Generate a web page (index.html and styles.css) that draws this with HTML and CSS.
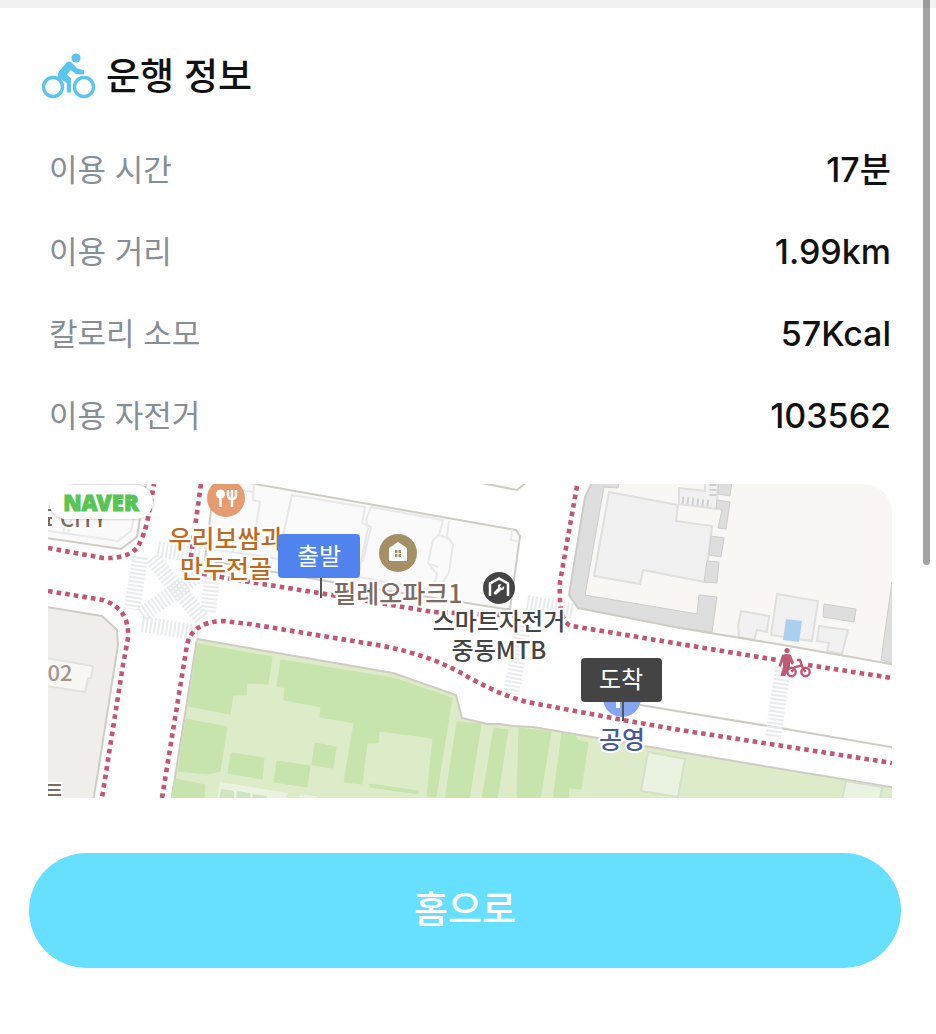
FILE: index.html
```html
<!DOCTYPE html>
<html lang="ko">

<head>
    <meta charset="UTF-8">
    <meta name="viewport" content="width=device-width, initial-scale=1.0">
    <title>운행 정보</title>
    <link rel="stylesheet" href="styles.css">
</head>

<body>
    <div class="divider"></div>
    <div class="scrollbar"></div>

    <main class="container">
        <div class="header">
            <svg class="bike" viewBox="0 0 54 48" aria-hidden="true">
                <circle cx="11" cy="34" r="9.500" />
                <circle cx="42" cy="34" r="9.500" />
                <circle class="head" cx="34" cy="5" r="4.600" />
                <path class="rider" d="M24.500 9.500Q27 7.500 29.500 9.500L35.500 15.500L42 17.300V21.500L34 21L28.500 17L25 21.500L29 25.500V39.500H24.800V30L17 25Q14.500 22 17 18.500Z" />
            </svg>
            <h1>운행 정보</h1>
        </div>

        <dl class="info">
            <div class="row">
                <dt>이용 시간</dt>
                <dd>17분</dd>
            </div>
            <div class="row">
                <dt>이용 거리</dt>
                <dd>1.99km</dd>
            </div>
            <div class="row">
                <dt>칼로리 소모</dt>
                <dd>57Kcal</dd>
            </div>
            <div class="row">
                <dt>이용 자전거</dt>
                <dd>103562</dd>
            </div>
        </dl>

        <div class="map">
            <svg viewBox="48 484 844 314">
                <!-- blocks -->
                <path class="block" d="M40 483H146L141 512L137 537L121 549L40 537Z" />
                <path class="line" d="M48 531L118 541L131 531L138 500M66 519L63 533M71 519L68 534" />
                <path class="block" d="M215 477L255 484L516 530L520 536L510 609L505 609L332 582L205 560Z" />
                <path class="room" d="M292 495L365 507L362 523L371 527L363 560L358 564L280 550Z" />
                <path class="room" d="M371 507L443 520L439 535L433 540L428 563L437 574L433 590L358 577L368 528L366 520Z" />
                <path class="line" d="M254 484L253 500L260 502L252 552M217 487L253 492M204 548L300 562M449 521L447 537L453 544L449 572L442 584M439 535L449 539M512 529L511 540L519 542M430 564L438 567" />
                <path class="block" d="M476 482L517 490L527 482Z" />
                <path class="campus" d="M593 480L585 497L569 595L578 608L680 628L783 645L896 665V480Z" />
                <path class="grey" d="M593 480L585 497L569 595L578 608L680 628L712 632L717 597L699 595L697 614L680 611L585 595L604 487L618 488L619 480Z" />
                <path class="house" d="M609 492L678 505L676 521L712 526L705 582L643 570L640 584L594 576Z" />
                <path class="house" d="M679 488L705 491V480H718L717 509L679 504Z" />
                <path class="ticks" d="M682 500L712 504M713 484V498" />
                <path class="grey" d="M719 480H732L730 496L718 494ZM717 500L730 502L726 529L718 528L722 510L716 508ZM711 536L724 538L721 557L709 555ZM707 561L719 562L717 583L704 582ZM824 604L856 609L854 622L823 617ZM892 582L881 660L896 664V580Z" />
                <path class="house" d="M741 611L769 616L767 632L757 630L754 640L739 637L738 626ZM777 594L818 601L812 641L771 635ZM819 626L848 630L842 654L827 651L829 643L817 641Z" />
                <path class="pool" d="M786 619L802 621L799 642L783 640Z" />
                <path class="curb" d="M593 480L585 497L569 595L578 608L680 628L783 645L896 665" />
                <path class="block land" d="M40 606L102 616L117 630L118 645L98 772L93 802H40Z" />
                <path class="annex" d="M40 657L93 666L91 678L88 678L85 692L40 685Z" />

                <!-- park -->
                <path class="park" d="M197 639L260 650L393 673L456 695L462 718L487 724L500 724L513 726L533 727L680 752L896 788V802H171Z" />
                <path class="grass" d="M198 644L272 657L268 684L247 683L246 695L233 695L230 714L188 706ZM186 719L227 727L220 771L208 774L178 771ZM175 779L205 785L204 800H171ZM231 753L264 758L262 779L228 773ZM281 660L393 678L452 698L436 797L427 796L433 738L379 731L378 743L367 743L362 784L344 782L354 723L320 717L321 707L284 700L285 688L277 686ZM315 743L336 747L333 768L312 765ZM277 761L310 766L307 787L274 782Z" />
                <path class="grass" d="M457 722L481 724L469 800H445ZM494 728L508 730L497 800H482ZM519 728L551 732L540 800H517ZM562 733L575 735L577 740L588 743L581 789L569 788L568 800H553ZM370 784L418 791V794L370 787Z" />
                <path class="lawn" d="M648 752L685 759L678 797L641 791ZM846 781L882 787L880 800H842Z" />
                <path class="court" d="M220 782L288 793L285 800H217ZM300 794L318 797V800H299Z" />
                <path class="courtcell" d="M221 789L234 791V800H219ZM237 791L250 793V800H236ZM253 794L267 796V800H252Z" />
                <path class="curb" d="M640 705L780 728L896 748" />

                <!-- crosswalks -->
                <path class="cross" d="M140 557L132 609M158 549L200 556M212 578L208 614M142 624L198 633M152 558L203 620M142 615L200 574" />
                <path class="cross" d="M527 603L573 611M523 626L511 694M783 667L773 738" />

                <!-- bike lanes -->
                <path class="lane" d="M48 548L103 558Q126 559 137 548Q144 537 148 518L154 484" />
                <path class="lane" d="M48 591L103 600Q130 609 128 638L123 665L102 798" />
                <path class="lane" d="M201 484L191 556Q190 571 204 574L250 582L350 598L433 612L520 616" />
                <path class="lane" d="M162 798L187 645Q192 622 223 621L250 624L377 645Q430 654 470 678Q500 695 527 702L623 720L680 730L892 763" />
                <path class="lane" d="M577 486L560 582Q558 624 572 626L680 644L777 660M808 665L892 678" />

                <!-- places -->
                <circle cx="226" cy="498" r="19" fill="#e79b70" />
                <circle cx="220.500" cy="494" r="4.500" fill="#fff" />
                <path class="stroke" d="M220.500 497V507M228 490V495Q228 499 232 499Q236 499 236 495V490M232 490V507" />
                <circle cx="398" cy="553" r="19" fill="#a48f67" />
                <path fill="#fff" d="M398 542L407 548V561H389V548Z" />
                <path fill="#a48f67" d="M395 550h2.500v3h-2.500zM398.500 550h2.500v3h-2.500zM395 554h2.500v3h-2.500zM398.500 554h2.500v3h-2.500z" />
                <circle cx="499" cy="588" r="16" fill="#444" />
                <path class="stroke" d="M490 596V583.500L499 578.500L508 583.500V596" />
                <path fill="#fff" d="M494 592L498 588Q497 584 501 584L500 587L502 588L504 586Q505 590 500.500 590.500L496.500 594.500Q493 595 494 592Z" />
                <circle cx="622" cy="698" r="19" fill="#84a5f2" />
                <path fill="#fff" d="M616 698h4v10h-4z" />
                <g class="ride">
                    <circle class="solid" cx="787" cy="650.500" r="2.600" />
                    <path class="solid" d="M782 655Q787 653 791 655L794 663L792 665L790 662V668L785 676H780.500L783 667V661L781 667L778.500 666Z" />
                    <circle cx="791.500" cy="672" r="4.200" />
                    <circle cx="805.500" cy="672" r="4.200" />
                    <path d="M791.500 672L795 667L801.500 665.500L805.500 672M797 660H800L802 666" />
                </g>

                <g class="label" text-anchor="middle">
                    <text class="brown latin" x="83" y="527">CITY</text>
                    <text class="tan" x="60" y="681">02</text>
                    <text class="brown" x="53" y="803">트</text>
                    <text class="orange" x="226" y="548">우리보쌈과</text>
                    <text class="orange" x="226" y="578">만두전골</text>
                    <text class="brown" x="398" y="603">필레오파크1</text>
                    <text class="dark" x="499" y="630">스마트자전거</text>
                    <text class="dark" x="499" y="659">중동MTB</text>
                    <text class="blue" x="622" y="749">공영</text>
                </g>
                <path class="cut" d="M44 510H52M44 518H52M49 518V525M44 525H52" />

                <!-- start / end -->
                <path class="pole" d="M321 577V598M623 701V721" />
                <rect x="278" y="534" width="82" height="44" rx="4" fill="#5083ed" />
                <text class="pin" x="319" y="565" text-anchor="middle">출발</text>
                <rect x="581" y="658" width="81" height="44" rx="4" fill="#444" />
                <text class="pin" x="621" y="688" text-anchor="middle">도착</text>
            </svg>
            <span class="naver">NAVER</span>
        </div>

        <button class="home" type="button">홈으로</button>
    </main>
</body>

</html>
```
FILE: styles.css
```css
/*General*/
* {
    margin: 0;
    padding: 0;
    box-sizing: border-box;
}

body {
    position: relative;
    background-color: #fff;
    color: #111;
    font-family: Inter, 'Noto Sans CJK KR', sans-serif;
}

.divider {
    height: 8px;
    background-color: #f1f1f1;
}

.scrollbar {
    position: absolute;
    top: 0;
    right: 6px;
    width: 7px;
    height: 565px;
    border-radius: 0 0 4px 4px;
    background-color: rgba(0, 0, 0, 0.36);
}

.container {
    display: flex;
    flex-direction: column;
    padding: 41px 35px 40px 29px;
}

/*header*/
.header {
    display: flex;
    align-items: center;
    gap: 10px;
    height: 56px;
    padding-left: 13px;
}

.header h1 {
    font-size: 37px;
    font-weight: 500;
    line-height: 56px;
}

.bike {
    width: 54px;
    height: 48px;
    fill: none;
    stroke: #5bc5f0;
    stroke-width: 3.4;
}

.bike .head,
.bike .rider {
    fill: #5bc5f0;
    stroke: none;
}

/*info*/
.info {
    display: flex;
    flex-direction: column;
    gap: 34px;
    padding: 41px 10px 44px 20px;
}

.row {
    display: flex;
    justify-content: space-between;
    height: 48px;
    line-height: 48px;
}

.row dt {
    font-size: 31px;
    color: #868e96;
}

.row dd {
    font-size: 34px;
    font-weight: 500;
}

/*map*/
.map {
    position: relative;
    margin: 0 9px 0 19px;
    border-radius: 28px 28px 0 0;
    overflow: hidden;
}

.map svg {
    display: block;
    width: 100%;
}

.naver {
    position: absolute;
    top: 1px;
    left: 1px;
    width: 104px;
    border-radius: 17px;
    background-color: #fff;
    box-shadow: 0 0 3px rgba(0, 0, 0, 0.3);
    color: #57c551;
    font-family: 'Noto Sans', sans-serif;
    font-size: 22px;
    font-weight: 900;
    line-height: 34px;
    text-align: center;
    -webkit-text-stroke: 1px #57c551;
}

.block {
    fill: #fafafa;
    stroke: #cfccc4;
    stroke-width: 2;
}

.land {
    fill: #efeeeb;
}

.room,
.line {
    fill: none;
    stroke: #e8e8e8;
    stroke-width: 2;
}

.campus {
    fill: #f8f7f3;
}

.grey {
    fill: #dedede;
    stroke: #cdcdcd;
}

.house {
    fill: #f1f1f1;
    stroke: #dfdfdf;
    stroke-width: 2;
}

.ticks {
    stroke: #cfcfcf;
    stroke-width: 7;
    stroke-dasharray: 2 3;
}

.pool {
    fill: #abcfee;
}

.annex {
    fill: #f8f7f4;
    stroke: #e3e1dc;
    stroke-width: 2;
}

.curb {
    fill: none;
    stroke: #cfccc4;
    stroke-width: 2;
}

.park {
    fill: #dcebc8;
    stroke: #cfccc4;
    stroke-width: 2;
}

.grass {
    fill: #c8e4ad;
    stroke: #c8e4ad;
    stroke-linejoin: round;
}

.lawn {
    fill: #eaf3df;
    stroke: #d5dfc9;
    stroke-width: 2;
}

.court {
    fill: #eaf3df;
}

.courtcell {
    fill: #cde5c2;
}

.cross {
    stroke: #e8ebed;
    stroke-width: 16;
    stroke-dasharray: 2 2;
}

.lane {
    fill: none;
    stroke: #bd5875;
    stroke-width: 4.6;
    stroke-dasharray: 4.6 4.1;
}

.stroke {
    fill: none;
    stroke: #fff;
    stroke-width: 2.5;
}

.ride {
    fill: none;
    stroke: #bd5875;
    stroke-width: 2.4;
}

.ride .solid {
    fill: #bd5875;
    stroke: none;
}

.cut {
    fill: none;
    stroke: #7d6b5f;
    stroke-width: 2;
}

.pole {
    stroke: #555;
    stroke-width: 2;
}

/*map text*/
.label text {
    font-family: 'Noto Sans CJK KR', sans-serif;
    font-size: 25px;
    font-weight: 500;
    stroke: #fff;
    stroke-width: 4;
    stroke-linejoin: round;
    paint-order: stroke;
}

.label .orange {
    fill: #c06a20;
}

.label .brown {
    fill: #7d6b5f;
}

.label .dark {
    fill: #444;
    font-size: 24px;
}

.label .blue {
    fill: #455a9b;
}

.label .latin {
    font-size: 22px;
}

.label .tan {
    fill: #a0978f;
    font-size: 22px;
    stroke: none;
}

.pin {
    font-family: 'Noto Sans CJK KR', sans-serif;
    font-size: 24px;
    fill: #fff;
}

/*button*/
.home {
    height: 115px;
    margin-top: 55px;
    padding-bottom: 8px;
    border: none;
    border-radius: 58px;
    background-color: #67dffe;
    color: #fff;
    font-family: inherit;
    font-size: 37px;
    font-weight: 500;
    cursor: pointer;
}
```
